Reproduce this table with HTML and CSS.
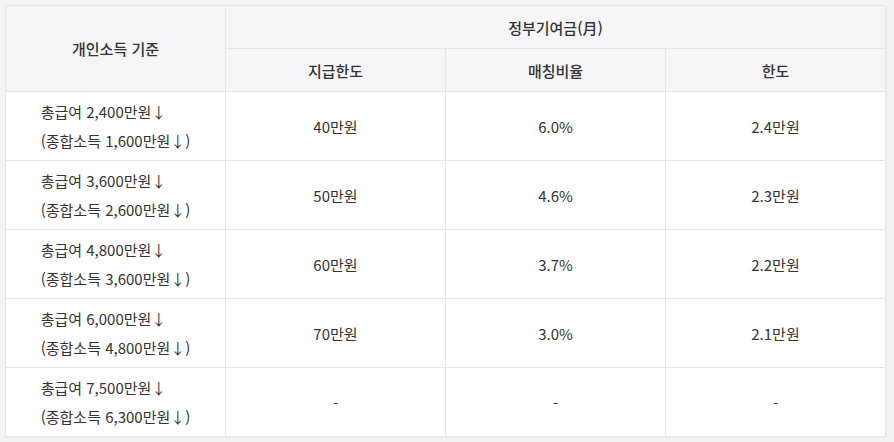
FILE: index.html
```html
<!DOCTYPE html>
<html lang="ko">
<head>
<meta charset="utf-8">
<link rel="stylesheet" href="styles.css">
</head>
<body>
<table class="grid">
  <colgroup><col class="c"><col class="c"><col class="c"><col class="c"></colgroup>
  <thead>
    <tr class="hrow">
      <th rowspan="2">개인소득 기준</th>
      <th colspan="3">정부기여금(月)</th>
    </tr>
    <tr class="hrow">
      <th>지급한도</th>
      <th>매칭비율</th>
      <th>한도</th>
    </tr>
  </thead>
  <tbody>
    <tr class="brow">
      <td><span class="two">총급여 2,400만원↓<br>(종합소득 1,600만원↓)</span></td>
      <td>40만원</td><td>6.0%</td><td>2.4만원</td>
    </tr>
    <tr class="brow">
      <td><span class="two">총급여 3,600만원↓<br>(종합소득 2,600만원↓)</span></td>
      <td>50만원</td><td>4.6%</td><td>2.3만원</td>
    </tr>
    <tr class="brow">
      <td><span class="two">총급여 4,800만원↓<br>(종합소득 3,600만원↓)</span></td>
      <td>60만원</td><td>3.7%</td><td>2.2만원</td>
    </tr>
    <tr class="brow">
      <td><span class="two">총급여 6,000만원↓<br>(종합소득 4,800만원↓)</span></td>
      <td>70만원</td><td>3.0%</td><td>2.1만원</td>
    </tr>
    <tr class="brow">
      <td><span class="two">총급여 7,500만원↓<br>(종합소득 6,300만원↓)</span></td>
      <td>-</td><td>-</td><td>-</td>
    </tr>
  </tbody>
</table>
</body>
</html>
```
FILE: styles.css
```css
html, body {
  margin: 0;
  padding: 0;
  background: #f4f4f4;
}
body {
  padding: 5px;
  font-family: "Noto Sans CJK KR", "Noto Sans", sans-serif;
  color: #333;
  font-size: 15px;
}
.grid {
  border-collapse: collapse;
  table-layout: fixed;
  width: 881px;
  background: #fff;
  box-shadow: 1px 1px 2px rgba(0,0,0,0.04);
}
.c { width: 220px; }
.grid th, .grid td {
  border: 1px solid #e6e6e6;
  text-align: center;
  vertical-align: middle;
  padding: 0;
}
.grid th {
  background: #f5f5f8;
  font-weight: 500;
  color: #333;
}
.hrow { height: 43px; }
.brow { height: 69px; }
.two {
  display: inline-block;
  text-align: left;
  line-height: 29px;
}
```
